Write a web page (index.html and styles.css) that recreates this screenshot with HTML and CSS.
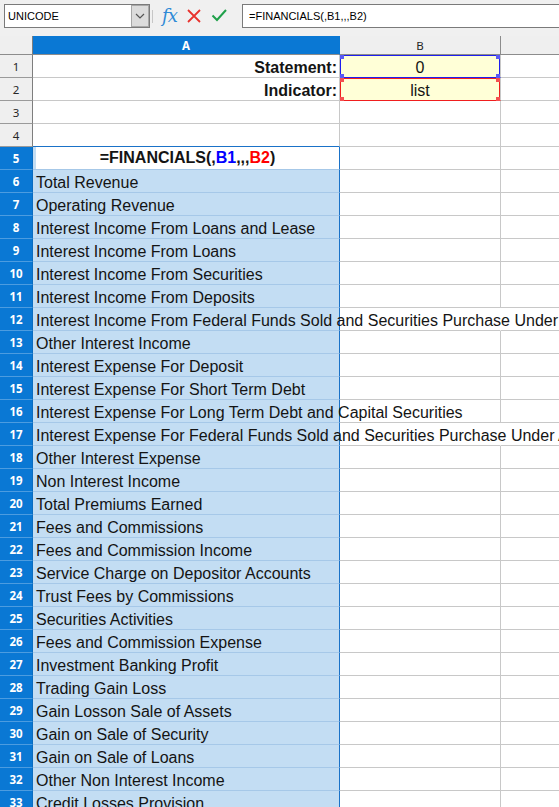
FILE: index.html
```html
<!DOCTYPE html>
<html>
<head>
<meta charset="utf-8">
<link rel="stylesheet" href="styles.css">
</head>
<body>
<div class="toolbar">
  <div class="namebox">
    <span class="nb-label">UNICODE</span>
    <div class="dd"><svg width="10" height="6" viewBox="0 0 10 6"><path d="M1 1 L5 5 L9 1" fill="none" stroke="#555" stroke-width="1.2"/></svg></div>
  </div>
  <div class="sep"></div>
  <span class="fx">fx</span>
  <svg class="icon-x" width="14" height="14" viewBox="0 0 14 14"><path d="M1 1 L13 13 M13 1 L1 13" stroke="#e8322d" stroke-width="1.8" fill="none"/></svg>
  <svg class="icon-ok" width="16" height="14" viewBox="0 0 16 14"><path d="M1.5 7.5 L6 12 L15 2" stroke="#1fa04a" stroke-width="2" fill="none"/></svg>
  <div class="formula">=FINANCIALS(,B1,,,B2)</div>
</div>

<div class="sheet">
  <div class="row hdr">
    <div class="rh corner"></div>
    <div class="a ch sel-ch">A</div>
    <div class="b ch">B</div>
    <div class="c ch"></div>
  </div>

  <div class="row">
    <div class="rh">1</div>
    <div class="a right bold">Statement:</div>
    <div class="b center ref ref-blue">0<span class="h tl"></span><span class="h tr"></span><span class="h bl"></span><span class="h br"></span></div>
    <div class="c"></div>
  </div>
  <div class="row">
    <div class="rh">2</div>
    <div class="a right bold">Indicator:</div>
    <div class="b center ref ref-red">list<span class="h tl"></span><span class="h tr"></span><span class="h bl"></span><span class="h br"></span></div>
    <div class="c"></div>
  </div>
  <div class="row">
    <div class="rh">3</div>
    <div class="a"></div>
    <div class="b"></div>
    <div class="c"></div>
  </div>
  <div class="row">
    <div class="rh">4</div>
    <div class="a above-cursor"></div>
    <div class="b"></div>
    <div class="c"></div>
  </div>
  <div class="row">
    <div class="rh rsel">5</div>
    <div class="a cursor"><div class="cursor-in bold">=FINANCIALS(,<span class="blue">B1</span>,,,<span class="red">B2</span>)</div></div>
    <div class="b"></div>
    <div class="c"></div>
  </div>

  <div class="row"><div class="rh rsel">6</div><div class="a sel"><span class="t">Total Revenue</span></div><div class="b"></div><div class="c"></div></div>
  <div class="row"><div class="rh rsel">7</div><div class="a sel"><span class="t">Operating Revenue</span></div><div class="b"></div><div class="c"></div></div>
  <div class="row"><div class="rh rsel">8</div><div class="a sel"><span class="t">Interest Income From Loans and Lease</span></div><div class="b"></div><div class="c"></div></div>
  <div class="row"><div class="rh rsel">9</div><div class="a sel"><span class="t">Interest Income From Loans</span></div><div class="b"></div><div class="c"></div></div>
  <div class="row"><div class="rh rsel">10</div><div class="a sel"><span class="t">Interest Income From Securities</span></div><div class="b"></div><div class="c"></div></div>
  <div class="row"><div class="rh rsel">11</div><div class="a sel"><span class="t">Interest Income From Deposits</span></div><div class="b"></div><div class="c"></div></div>
  <div class="row"><div class="rh rsel">12</div><div class="a sel"><span class="t">Interest Income From Federal Funds Sold and Securities Purchase Under</span></div><div class="b ovf"></div><div class="c"></div></div>
  <div class="row"><div class="rh rsel">13</div><div class="a sel"><span class="t">Other Interest Income</span></div><div class="b"></div><div class="c"></div></div>
  <div class="row"><div class="rh rsel">14</div><div class="a sel"><span class="t">Interest Expense For Deposit</span></div><div class="b"></div><div class="c"></div></div>
  <div class="row"><div class="rh rsel">15</div><div class="a sel"><span class="t">Interest Expense For Short Term Debt</span></div><div class="b"></div><div class="c"></div></div>
  <div class="row"><div class="rh rsel">16</div><div class="a sel"><span class="t">Interest Expense For Long Term Debt and Capital Securities</span></div><div class="b"></div><div class="c"></div></div>
  <div class="row"><div class="rh rsel">17</div><div class="a sel"><span class="t">Interest Expense For Federal Funds Sold and Securities Purchase Under Agreements</span></div><div class="b ovf"></div><div class="c"></div></div>
  <div class="row"><div class="rh rsel">18</div><div class="a sel"><span class="t">Other Interest Expense</span></div><div class="b"></div><div class="c"></div></div>
  <div class="row"><div class="rh rsel">19</div><div class="a sel"><span class="t">Non Interest Income</span></div><div class="b"></div><div class="c"></div></div>
  <div class="row"><div class="rh rsel">20</div><div class="a sel"><span class="t">Total Premiums Earned</span></div><div class="b"></div><div class="c"></div></div>
  <div class="row"><div class="rh rsel">21</div><div class="a sel"><span class="t">Fees and Commissions</span></div><div class="b"></div><div class="c"></div></div>
  <div class="row"><div class="rh rsel">22</div><div class="a sel"><span class="t">Fees and Commission Income</span></div><div class="b"></div><div class="c"></div></div>
  <div class="row"><div class="rh rsel">23</div><div class="a sel"><span class="t">Service Charge on Depositor Accounts</span></div><div class="b"></div><div class="c"></div></div>
  <div class="row"><div class="rh rsel">24</div><div class="a sel"><span class="t">Trust Fees by Commissions</span></div><div class="b"></div><div class="c"></div></div>
  <div class="row"><div class="rh rsel">25</div><div class="a sel"><span class="t">Securities Activities</span></div><div class="b"></div><div class="c"></div></div>
  <div class="row"><div class="rh rsel">26</div><div class="a sel"><span class="t">Fees and Commission Expense</span></div><div class="b"></div><div class="c"></div></div>
  <div class="row"><div class="rh rsel">27</div><div class="a sel"><span class="t">Investment Banking Profit</span></div><div class="b"></div><div class="c"></div></div>
  <div class="row"><div class="rh rsel">28</div><div class="a sel"><span class="t">Trading Gain Loss</span></div><div class="b"></div><div class="c"></div></div>
  <div class="row"><div class="rh rsel">29</div><div class="a sel"><span class="t">Gain Losson Sale of Assets</span></div><div class="b"></div><div class="c"></div></div>
  <div class="row"><div class="rh rsel">30</div><div class="a sel"><span class="t">Gain on Sale of Security</span></div><div class="b"></div><div class="c"></div></div>
  <div class="row"><div class="rh rsel">31</div><div class="a sel"><span class="t">Gain on Sale of Loans</span></div><div class="b"></div><div class="c"></div></div>
  <div class="row"><div class="rh rsel">32</div><div class="a sel"><span class="t">Other Non Interest Income</span></div><div class="b"></div><div class="c"></div></div>
  <div class="row"><div class="rh rsel">33</div><div class="a sel"><span class="t">Credit Losses Provision</span></div><div class="b"></div><div class="c"></div></div>
</div>
</body>
</html>
```

FILE: styles.css
```css
html, body {
  margin: 0;
  padding: 0;
}
body {
  width: 559px;
  height: 807px;
  overflow: hidden;
  background: #ffffff;
  font-family: "Liberation Sans", Arial, sans-serif;
  color: #141414;
}

/* ---------- toolbar ---------- */
.toolbar {
  height: 36px;
  box-sizing: border-box;
  padding-top: 4px;
  background: #f0f0f0;
  display: flex;
  align-items: flex-start;
}
.namebox {
  margin-left: 4px;
  width: 146px;
  height: 24px;
  box-sizing: border-box;
  border: 1px solid #7a7a7a;
  background: #ffffff;
  display: flex;
}
.nb-label {
  flex: 1;
  font-size: 11px;
  line-height: 22px;
  padding-left: 3px;
  color: #000;
}
.dd {
  width: 18px;
  box-sizing: border-box;
  background: #dcdcdc;
  border: 1px solid #a8a8a8;
  display: flex;
  align-items: center;
  justify-content: center;
}
.sep {
  width: 1px;
  height: 13px;
  margin: 6px 0 0 2px;
  background: #c6c6c6;
}
.fx {
  width: 16px;
  margin-left: 9px;
  font-family: "DejaVu Serif", "Liberation Serif", serif;
  font-style: italic;
  font-size: 18px;
  line-height: 23px;
  color: #2f8ad6;
  letter-spacing: -1px;
}
.icon-x {
  margin-left: 9px;
  margin-top: 5px;
}
.icon-ok {
  margin-left: 10px;
  margin-top: 4px;
}
.formula {
  flex: 1;
  margin-left: 15px;
  margin-right: -20px;
  height: 24px;
  box-sizing: border-box;
  border: 1px solid #7a7a7a;
  background: #ffffff;
  font-size: 11px;
  line-height: 22px;
  padding-left: 6px;
  color: #000;
}

/* ---------- sheet ---------- */
.sheet {
  display: flex;
  flex-direction: column;
}
.row {
  display: flex;
  height: 23px;
}
.row > div {
  box-sizing: border-box;
  height: 23px;
  border-bottom: 1px solid #c8c8c8;
  border-right: 1px solid #c8c8c8;
}
.rh {
  width: 33px;
  flex: none;
  background: #efefef;
  border-right-color: #7e7e7e !important;
  border-bottom-color: #9a9a9a !important;
  font-family: "Noto Sans", "Open Sans", sans-serif;
  font-size: 11.5px;
  line-height: 23px;
  text-align: center;
  color: #262626;
}
.rh.rsel {
  background: #0a78d4;
  color: #ffffff;
  font-weight: bold;
  border-bottom-color: #4c9ce0 !important;
  border-right-color: #0a6cc0 !important;
}
.a {
  width: 307px;
  flex: none;
  font-size: 16px;
  line-height: 19px;
  padding: 3px 3px 0 3px;
  white-space: nowrap;
}
.b {
  width: 161px;
  flex: none;
  font-size: 16px;
  line-height: 19px;
  padding-top: 3px;
  position: relative;
}
.c {
  flex: 1;
  min-width: 80px;
}
.right { text-align: right; padding-right: 2px; }
.center { text-align: center; }
.bold { font-weight: bold; }

/* header row */
.row.hdr { height: 19px; }
.row.hdr > div {
  height: 19px;
  background: #efefef;
  border-bottom: 1px solid #8c8c8c;
  border-right: 1px solid #8c8c8c;
}
.ch {
  font-family: "Noto Sans", "Open Sans", sans-serif;
  font-size: 11.5px;
  line-height: 19px;
  padding: 0;
  text-align: center;
  color: #262626;
}
.row.hdr > .sel-ch {
  background: #0a78d4;
  color: #ffffff;
  font-weight: bold;
  border-right-color: #0a78d4;
}
.row.hdr > .corner {
  border-bottom-color: #8c8c8c !important;
}

/* references B1 / B2 */
.ref { background: #ffffd7; }
.row > .ref-blue {
  border-bottom-color: #1e1ef0;
  box-shadow: inset 1px 1px 0 #1e1ef0, inset -1px 0 0 #1e1ef0;
}
.row > .ref-red {
  border-bottom-color: #f01e1e;
  box-shadow: inset 1px 1px 0 #f01e1e, inset -1px 0 0 #f01e1e;
}
.h {
  position: absolute;
  width: 4px;
  height: 4px;
}
.ref-blue .h { background: #5a5af5; }
.ref-red .h { background: #f55050; }
.h.tl { left: 0; top: 0; }
.h.tr { right: 0; top: 0; }
.h.bl { left: 0; bottom: -1px; }
.h.br { right: 0; bottom: -1px; }

/* selection A5:A33 */
.row > .above-cursor { border-bottom-color: #1a72c8; }
.row > .cursor {
  padding: 0 0 0 3px;
  background: #c3ddf3;
  border-right-color: #1a72c8;
  border-bottom-color: #a6c8e8;
}
.cursor-in {
  height: 22px;
  box-sizing: border-box;
  background: #ffffff;
  text-align: center;
  font-size: 16px;
  line-height: 20px;
  padding-top: 1px;
}
.blue { color: #0000ff; }
.red { color: #ff0000; }
.row > .sel {
  background: #c3ddf3;
  border-right-color: #1a72c8;
  border-bottom-color: #a6c8e8;
}
.t {
  position: relative;
  z-index: 2;
}
.row > .ovf { border-right-color: transparent; }
```
